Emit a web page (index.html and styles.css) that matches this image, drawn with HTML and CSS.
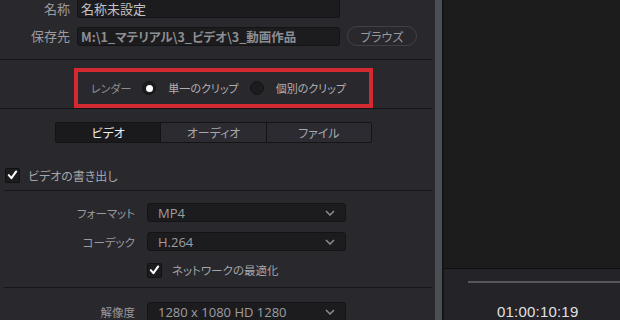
FILE: index.html
```html
<!DOCTYPE html>
<html lang="ja">
<head>
<meta charset="utf-8">
<link rel="stylesheet" href="styles.css">
</head>
<body>
<div class="app">
  <section class="left">
    <div class="file-rows">
      <div class="frow first">
        <span class="flabel">名称</span>
        <div class="field name-field">名称未設定</div>
      </div>
      <div class="frow">
        <span class="flabel">保存先</span>
        <div class="field path-field">M:\1_マテリアル\3_ビデオ\3_動画作品</div>
        <button class="browse">ブラウズ</button>
      </div>
    </div>
    <div class="divider"></div>
    <div class="render-wrap">
      <div class="render-box">
        <span class="rlabel">レンダー</span>
        <span class="radio on"></span>
        <span class="ropt">単一のクリップ</span>
        <span class="radio"></span>
        <span class="ropt">個別のクリップ</span>
      </div>
    </div>
    <div class="divider"></div>
    <div class="tabs">
      <div class="tab active">ビデオ</div>
      <div class="tab">オーディオ</div>
      <div class="tab">ファイル</div>
    </div>
    <div class="export-row">
      <span class="check"><svg viewBox="0 0 14 14" width="14" height="14"><path d="M3 7.2 L5.8 10.4 L11 3.2" fill="none" stroke="#fff" stroke-width="2.2" stroke-linecap="round" stroke-linejoin="round"/></svg></span>
      <span class="clabel">ビデオの書き出し</span>
    </div>
    <div class="divider inset"></div>
    <div class="settings">
      <span class="slabel">フォーマット</span>
      <div class="select"><span>MP4</span><svg class="chev" viewBox="0 0 10 6" width="10" height="6"><path d="M1 1 L5 5 L9 1" fill="none" stroke="#8d8d92" stroke-width="1.5"/></svg></div>
      <span class="slabel">コーデック</span>
      <div class="select"><span>H.264</span><svg class="chev" viewBox="0 0 10 6" width="10" height="6"><path d="M1 1 L5 5 L9 1" fill="none" stroke="#8d8d92" stroke-width="1.5"/></svg></div>
      <span></span>
      <div class="netopt">
        <span class="check"><svg viewBox="0 0 14 14" width="14" height="14"><path d="M3 7.2 L5.8 10.4 L11 3.2" fill="none" stroke="#fff" stroke-width="2.2" stroke-linecap="round" stroke-linejoin="round"/></svg></span>
        <span class="clabel">ネットワークの最適化</span>
      </div>
    </div>
    <div class="divider inset"></div>
    <div class="settings res">
      <span class="slabel">解像度</span>
      <div class="select"><span>1280 x 1080 HD 1280</span><svg class="chev" viewBox="0 0 10 6" width="10" height="6"><path d="M1 1 L5 5 L9 1" fill="none" stroke="#8d8d92" stroke-width="1.5"/></svg></div>
    </div>
  </section>
  <div class="splitter"></div>
  <section class="right">
    <div class="preview"></div>
    <div class="transport">
      <div class="scrub"></div>
      <div class="timecode">01:00:10:19</div>
    </div>
  </section>
</div>
</body>
</html>
```
FILE: styles.css
```css
* { box-sizing: border-box; }
html, body { margin: 0; padding: 0; }
body {
  width: 620px;
  height: 320px;
  overflow: hidden;
  background: #28282d;
  font-family: "Noto Sans CJK JP", "Noto Sans", sans-serif;
  font-feature-settings: "palt";
  color: #a9a9ad;
}
.app {
  display: flex;
  height: 320px;
}
.left {
  width: 435px;
  flex: none;
  background: #28282d;
  padding-right: 3px;
}
.file-rows {
  display: flex;
  flex-direction: column;
  gap: 8px;
}
.frow {
  display: flex;
  align-items: center;
  height: 20px;
}
.frow.first { height: 18px; }
.flabel {
  width: 77px;
  padding-right: 7px;
  text-align: right;
  font-size: 13px;
  line-height: 18px;
  color: #9c9ca0;
}
.field {
  height: 20px;
  width: 263px;
  background: #1c1c1e;
  border: 1px solid #141416;
  border-radius: 3px;
  font-size: 13px;
  line-height: 18px;
  padding-left: 3px;
  color: #c2c2c4;
  white-space: nowrap;
  overflow: hidden;
}
.name-field {
  height: 18px;
  border-top: none;
  border-radius: 0 0 3px 3px;
  line-height: 17px;
}
.path-field {
  height: 19px;
  font-weight: bold;
  color: #8e8e92;
  font-size: 12.5px;
  line-height: 17px;
}
.browse {
  margin-left: 7px;
  width: 70px;
  height: 20px;
  border-radius: 10px;
  border: 1px solid #404046;
  background: transparent;
  color: #98989c;
  font-family: inherit;
  font-feature-settings: "palt";
  font-size: 12px;
  padding: 0;
}
.divider {
  height: 1px;
  background: #161618;
  margin-top: 13px;
}
.render-wrap {
  padding: 8px 0 0 74px;
}
.render-box {
  width: 299px;
  height: 40px;
  border: 4px solid #d22a30;
  display: flex;
  align-items: center;
  padding-left: 13px;
  font-size: 11px;
  white-space: nowrap;
}
.render-box > * { flex: none; }
.render-wrap + .divider { margin-top: 0; }
.rlabel { color: #8e8e92; margin-right: 11px; }
.radio {
  width: 14px;
  height: 14px;
  border-radius: 50%;
  background: #1c1c1e;
  border: 1px solid #141416;
  display: inline-flex;
  align-items: center;
  justify-content: center;
  margin-right: 12px;
}
.radio.on::after {
  content: "";
  width: 7px;
  height: 7px;
  border-radius: 50%;
  background: #fff;
}
.ropt { color: #b0b0b4; margin-right: 11px; }
.tabs {
  margin: 13px 0 0 55px;
  width: 317px;
  height: 21px;
  display: flex;
  border: 1px solid #141416;
  border-radius: 2px;
  background: #2b2b31;
}
.tab {
  flex: 1;
  text-align: center;
  font-size: 12px;
  line-height: 19px;
  color: #a8a8ac;
  border-left: 1px solid #141416;
}
.tab:first-child { border-left: none; }
.tab.active { background: #1a1a1c; color: #f0f0f0; }
.export-row {
  display: flex;
  align-items: center;
  margin: 24px 0 0 5px;
  height: 16px;
}
.check {
  width: 15px;
  height: 15px;
  background: #1c1c1e;
  border: 1px solid #111113;
  border-radius: 2px;
  display: inline-flex;
  align-items: center;
  justify-content: center;
  margin-right: 8px;
}
.clabel { font-size: 12px; color: #a6a6aa; }
.divider.inset { margin: 7px 0 0 4px; }
.settings {
  display: grid;
  grid-template-columns: 135px 199px;
  column-gap: 12px;
  row-gap: 10px;
  align-items: center;
  margin-top: 12px;
}
.slabel {
  text-align: right;
  font-size: 11.5px;
  color: #9a9a9e;
}
.select {
  height: 19px;
  background: #1c1c1e;
  border: 1px solid #141416;
  border-radius: 3px;
  display: flex;
  align-items: center;
  justify-content: space-between;
  padding: 0 10px 0 10px;
  font-family: "Open Sans", "Noto Sans", sans-serif;
  font-size: 13px;
  color: #9e9ea2;
}
.netopt {
  display: flex;
  align-items: center;
  margin-top: 1px;
}
.netopt .check { margin-right: 10px; }
.netopt .clabel { font-size: 11.5px; }
.divider.inset + .settings.res { margin-top: 14px; }
.settings + .divider.inset { margin-top: 9px; }
.splitter {
  width: 9px;
  flex: none;
  background: #4b4e54;
  border-right: 2px solid #141415;
}
.right {
  flex: 1;
  display: flex;
  flex-direction: column;
}
.preview {
  height: 273px;
  background: #1c1c1d;
  border-bottom: 1px solid #0e0e0f;
}
.transport {
  flex: 1;
  background: #232328;
  padding-top: 12px;
}
.scrub {
  margin-left: 24px;
  height: 2px;
  background: #56565b;
}
.timecode {
  margin: 20px 0 0 53px;
  font-family: "Liberation Sans", Arial, sans-serif;
  font-size: 15px;
  color: #e0e0e2;
  letter-spacing: 0.2px;
}
```
